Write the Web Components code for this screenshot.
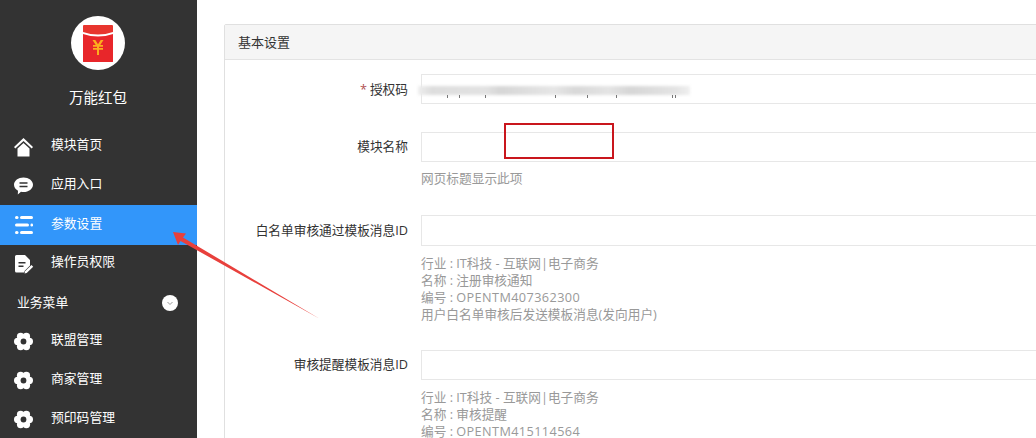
<!DOCTYPE html>
<html lang="zh">
<head>
<meta charset="utf-8">
<title>基本设置</title>
<style>
  html, body { margin: 0; height: 438px; overflow: hidden; background: #fff; }
  body { font: 13px "Open Sans", "Noto Sans CJK SC", sans-serif; color: #333; }
  .code { letter-spacing: .4px; }
</style>
</head>
<body>
<app-shell>
  <side-nav slot="side" title-text="万能红包">
    <nav-item icon="home">模块首页</nav-item>
    <nav-item icon="chat">应用入口</nav-item>
    <nav-item icon="list" active>参数设置</nav-item>
    <nav-item icon="doc">操作员权限</nav-item>
    <nav-section>业务菜单</nav-section>
    <nav-item icon="gear">联盟管理</nav-item>
    <nav-item icon="gear">商家管理</nav-item>
    <nav-item icon="gear">预印码管理</nav-item>
  </side-nav>
  <form-panel heading="基本设置">
    <form-row label="授权码" required top="14" masked></form-row>
    <form-row label="模块名称" top="28" lift>
      <div>网页标题显示此项</div>
    </form-row>
    <form-row label="白名单审核通过模板消息ID" top="28" tall wide-gap>
      <div>行业 : IT科技 - 互联网|电子商务</div>
      <div>名称 : 注册审核通知</div>
      <div>编号 : <span class="code">OPENTM407362300</span></div>
      <div>用户白名单审核后发送模板消息(发向用户)</div>
    </form-row>
    <form-row label="审核提醒模板消息ID" top="27" lift wide-gap>
      <div>行业 : IT科技 - 互联网|电子商务</div>
      <div>名称 : 审核提醒</div>
      <div>编号 : <span class="code">OPENTM415114564</span></div>
    </form-row>
  </form-panel>
  <shot-notes slot="over"></shot-notes>
</app-shell>

<script>
var ICONS = {
  home: '<path d="M9.500 1 0 10l1.300 1.500L9.500 4l8.200 7.500L19 10z"/><path d="M3.500 11.600 9.500 6l6 5.600V19.500h-12z"/>',
  chat: '<path fill-rule="evenodd" d="M9.500 1.500c5.200 0 9.500 3.200 9.500 7.300s-4.300 7.300-9.500 7.300c-.9 0-1.700-.1-2.500-.3L3.800 18.500l.2-3.800C1.600 13.400 0 11.300 0 8.800 0 4.700 4.300 1.500 9.500 1.500zM5.500 6.200v1.500h8V6.200zM5.500 9.700v1.500h8V9.700z"/>',
  list: '<rect x="1" y="1" width="3.500" height="3" rx="1.500"/><rect x="6" y="1" width="13" height="3" rx="1.500"/><rect x="1" y="8.500" width="14" height="3" rx="1.500"/><rect x="16.500" y="8.500" width="2.500" height="3" rx="1.250"/><rect x="1" y="16" width="3.500" height="3" rx="1.500"/><rect x="6" y="16" width="13" height="3" rx="1.500"/>',
  doc: '<path fill-rule="evenodd" d="M2.500 1h8.500l5 5v5.500l-5.500 5.500-.5 1.500H2.500A1.500 1.500 0 0 1 1 17V2.500A1.500 1.500 0 0 1 2.500 1zM4.500 8v1.500h7V8zM4.500 11.500V13h5v-1.500z"/><path d="M17.500 11l1.700 1.700-6.500 6.300-2.200.5.500-2.200z"/>',
  gear: '<g><circle cx="9.500" cy="9.500" r="6.500"/><circle cx="15.300" cy="9.500" r="3.700"/><circle cx="3.700" cy="9.500" r="3.700"/><circle cx="12.400" cy="4.400" r="3.700"/><circle cx="6.600" cy="4.400" r="3.700"/><circle cx="12.400" cy="14.600" r="3.700"/><circle cx="6.600" cy="14.600" r="3.700"/><circle cx="9.500" cy="9.500" r="2.900" fill="#333"/></g>'
};

// small helper, every element below is the same shape
function define(name, html, setup) {
  customElements.define(name, class extends HTMLElement {
    connectedCallback() {
      if (this.shadowRoot) return;
      this.attachShadow({ mode: 'open' }).innerHTML = html;
      if (setup) setup(this, this.shadowRoot);
    }
  });
}

define('app-shell', `
  <style>
    :host { display: flex; position: relative; width: 1036px; height: 438px; overflow: hidden; }
    .main { flex: 1; min-width: 0; padding: 24px 0 0 27px; }
  </style>
  <slot name="side"></slot>
  <div class="main"><slot></slot></div>
  <slot name="over"></slot>
`);

define('side-nav', `
  <style>
    :host { display: block; flex: none; width: 197px; height: 438px; background: #333; color: #fff; }
    .logo { display: flex; justify-content: center; padding: 16px 1px 0 0; }
    .logo svg { display: block; }
    .name { text-align: center; font-size: 14.500px; line-height: 20px; margin: 18px 1px 19px 0; }
  </style>
  <div class="logo">
    <svg width="54" height="54" viewBox="0 0 54 54">
      <circle cx="27" cy="27" r="27" fill="#fff"/>
      <path d="M12 9.500Q12 9 13 9H41Q42 9 42 9.500V16Q27 21 12 16z" fill="#e8352e"/>
      <path d="M12 18Q27 23 42 18V45.500Q42 46 41 46H13Q12 46 12 45.500z" fill="#e8262a"/>
      <path d="M21.500 24h2.800L27 28.300 29.700 24h2.800l-3.200 5H32v1.700h-4v1.300h4v1.700h-4V39h-2v-5.300h-4V32h4v-1.300h-4V29h2.700z" fill="#fcae1e"/>
    </svg>
  </div>
  <div class="name"></div>
  <slot></slot>
`, function (el, root) {
  root.querySelector('.name').textContent = el.getAttribute('title-text');
});

define('nav-item', `
  <style>
    :host { display: flex; align-items: center; height: 39px; color: #fff; font-size: 12.800px; }
    :host([active]) { background: #3296fa; height: 40px; margin-bottom: -1px; position: relative; }
    svg { display: block; margin-left: 14px; width: 20px; height: 20px; fill: #fff; flex: none; }
    span { margin: 0 0 6px 17px; }
  </style>
  <svg viewBox="0 0 20 20"></svg><span><slot></slot></span>
`, function (el, root) {
  root.querySelector('svg').innerHTML = ICONS[el.getAttribute('icon')];
});

define('nav-section', `
  <style>
    :host { display: flex; align-items: center; justify-content: space-between; height: 39px; padding: 0 19px 2px 17px; box-sizing: border-box; color: #fff; font-size: 12.800px; }
    svg { display: block; margin-top: 2px; }
  </style>
  <span><slot></slot></span>
  <svg width="16" height="16" viewBox="0 0 16 16">
    <circle cx="8" cy="8" r="8" fill="#fff"/>
    <path d="M5.500 7 8 9.500 10.500 7" fill="none" stroke="#999" stroke-width="1"/>
  </svg>
`);

define('form-panel', `
  <style>
    :host { display: block; width: 1000px; height: 500px; border: 1px solid #e0e0e0; border-radius: 2px 0 0 0; box-sizing: border-box; }
    .head { height: 35px; line-height: 34px; padding-left: 13px; background: #f5f5f5; border-bottom: 1px solid #e3e3e3; font-size: 13px; color: #333; box-sizing: border-box; }
  </style>
  <div class="head"></div>
  <slot></slot>
`, function (el, root) {
  root.querySelector('.head').textContent = el.getAttribute('heading');
});

define('form-row', `
  <style>
    :host { display: grid; grid-template-columns: 183px 1fr; column-gap: 13px; }
    .label { height: 30px; line-height: 30px; text-align: right; font-size: 12.700px; color: #333; white-space: nowrap; }
    :host([lift]) .label { line-height: 28px; }
    .label i { color: #b05050; font-style: normal; margin-right: 3px; }
    .box { position: relative; height: 30px; border: 1px solid #e7e7e7; box-sizing: border-box; background: #fff; }
    :host([tall]) .box { height: 31px; }
    .smudge { position: absolute; left: -4px; top: 11px; width: 272px; height: 9px; background: linear-gradient(90deg, #eee 0, #ddd 5%, #e2e2e2 25%, #d6d6d6 30%, #e6e6e6 50%, #d8d8d8 58%, #e4e4e4 70%, #d6d6d6 78%, #e4e4e4 95%, #f0f0f0 100%); filter: blur(1.500px); }
    .tick { position: absolute; top: 20px; width: 1px; height: 3px; background: #777; }
    .help { grid-column: 2; font-size: 12.700px; line-height: 17px; color: #999; padding-top: 8px; }
    :host([wide-gap]) .help { padding-top: 9px; }
    .help.none { display: none; }
  </style>
  <div class="label"></div>
  <div class="box"></div>
  <div class="help"><slot></slot></div>
`, function (el, root) {
  var label = root.querySelector('.label');
  label.textContent = el.getAttribute('label');
  if (el.hasAttribute('required')) {
    var star = document.createElement('i');
    star.textContent = '*';
    label.prepend(star);
  }
  el.style.marginTop = el.getAttribute('top') + 'px';
  if (!el.children.length) root.querySelector('.help').classList.add('none');
  if (el.hasAttribute('masked')) {
    // blurred licence key, only the descenders stay readable
    var marks = [25, 37, 63, 133, 165, 194, 250, 253];
    root.querySelector('.box').innerHTML = '<div class="smudge"></div>' +
      marks.map(function (x) { return '<div class="tick" style="left:' + x + 'px"></div>'; }).join('');
  }
});

// red annotations drawn on top of the screenshot
define('shot-notes', `
  <style>
    :host { position: absolute; left: 0; top: 0; width: 1036px; height: 438px; pointer-events: none; }
    svg { display: block; }
  </style>
  <svg width="1036" height="438" viewBox="0 0 1036 438">
    <rect x="505" y="124" width="108" height="34" fill="none" stroke="#c9161d" stroke-width="2"/>
    <path d="M173 232 186 233.500 183 237.500 320 319 180.500 241 178 245z" fill="#e8403c"/>
  </svg>
`);
</script>
</body>
</html>
